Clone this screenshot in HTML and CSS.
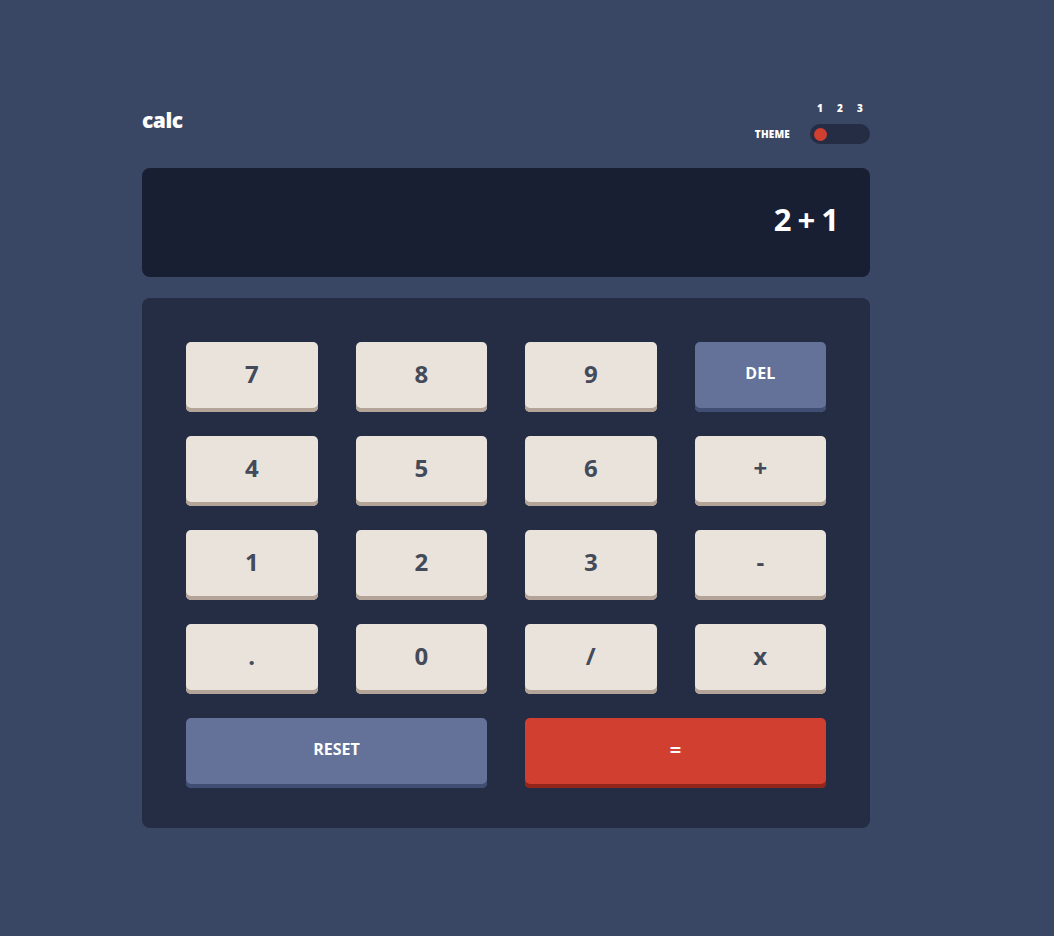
FILE: index.html
```html
<!DOCTYPE html>
<html lang="en">
<head>
<meta charset="utf-8">
<title>calc</title>
<link rel="stylesheet" href="styles.css">
</head>
<body>
<main class="calc">
  <header class="header">
    <h1 class="logo">calc</h1>
    <div class="theme">
      <span class="theme-label">THEME</span>
      <div class="theme-switch">
        <div class="theme-nums"><span>1</span><span>2</span><span>3</span></div>
        <div class="toggle"><span class="knob"></span></div>
      </div>
    </div>
  </header>
  <section class="display">2 + 1</section>
  <section class="keypad">
    <button class="key">7</button>
    <button class="key">8</button>
    <button class="key">9</button>
    <button class="key key-blue">DEL</button>
    <button class="key">4</button>
    <button class="key">5</button>
    <button class="key">6</button>
    <button class="key">+</button>
    <button class="key">1</button>
    <button class="key">2</button>
    <button class="key">3</button>
    <button class="key">-</button>
    <button class="key">.</button>
    <button class="key">0</button>
    <button class="key">/</button>
    <button class="key">x</button>
    <button class="key key-blue key-wide">RESET</button>
    <button class="key key-red key-wide">=</button>
  </section>
</main>
</body>
</html>
```
FILE: styles.css
```css
* { box-sizing: border-box; }
html, body { margin: 0; }
body {
  background: #3a4764;
  font-family: "Open Sans", "Liberation Sans", sans-serif;
  font-weight: 700;
  color: #fff;
  min-height: 936px;
}
.calc {
  width: 728px;
  margin-left: 142px;
  padding-top: 100px;
}
.header {
  display: flex;
  justify-content: space-between;
  align-items: flex-end;
  height: 44px;
  margin-bottom: 24px;
}
.logo {
  margin: 0 0 12px 0;
  font-size: 21px;
  line-height: 24px;
  letter-spacing: -0.5px;
  font-weight: 800;
}
.theme {
  display: flex;
  align-items: flex-end;
  gap: 20px;
}
.theme-label {
  font-size: 10px;
  letter-spacing: 0.2px;
  line-height: 20px;
  font-weight: 800;
}
.theme-switch {
  display: flex;
  flex-direction: column;
  gap: 10px;
}
.theme-nums {
  display: flex;
  justify-content: space-around;
  padding: 0 0 0 0;
  font-size: 10px;
  line-height: 12px;
  font-weight: 800;
}
.toggle {
  width: 60px;
  height: 20px;
  border-radius: 10px;
  background: #242d44;
  display: flex;
  align-items: center;
  padding-left: 4px;
}
.knob {
  width: 13px;
  height: 13px;
  border-radius: 50%;
  background: #d03f2f;
}
.display {
  height: 109px;
  background: #181f33;
  border-radius: 8px;
  display: flex;
  align-items: center;
  justify-content: flex-end;
  padding: 0 32px 8px 0;
  font-size: 31px;
  letter-spacing: -1px;
}
.keypad {
  margin-top: 21px;
  background: #242d44;
  border-radius: 8px;
  padding: 44px 44px 40px;
  display: grid;
  grid-template-columns: repeat(4, 1fr);
  column-gap: 38px;
  row-gap: 24px;
}
.key {
  height: 70px;
  border: 0;
  border-radius: 5px;
  background: #eae3dc;
  box-shadow: inset 0 -4px 0 #b3a497;
  color: #434a59;
  font-family: inherit;
  font-weight: 700;
  font-size: 24px;
  padding: 0 0 8px;
  cursor: pointer;
}
.key-blue {
  background: #647198;
  box-shadow: inset 0 -4px 0 #414e73;
  color: #fff;
  font-size: 16px;
}
.key-red {
  background: #d03f2f;
  box-shadow: inset 0 -4px 0 #93261a;
  color: #fff;
  font-size: 20px;
}
.key-wide { grid-column: span 2; }
```
